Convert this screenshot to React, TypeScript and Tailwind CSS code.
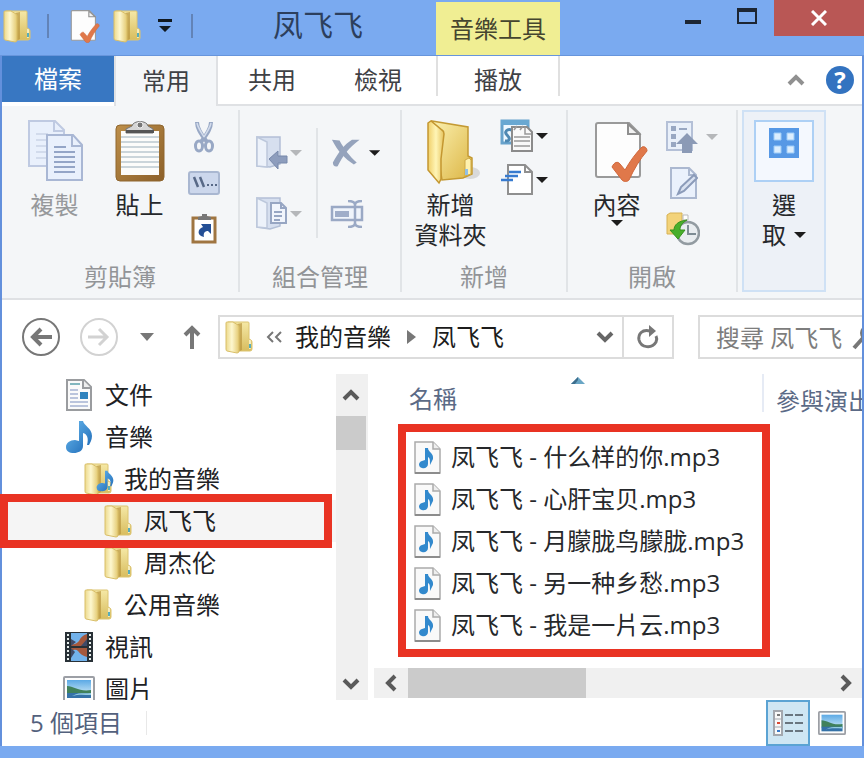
import type { ReactNode } from "react";

function Folder() {
  return (
    <svg width="28" height="34" viewBox="0 0 28 34" aria-hidden="true">
      <defs>
        <linearGradient id="fBack" x1="0" y1="0" x2="0" y2="1">
          <stop offset="0" stopColor="#f5e8a6" />
          <stop offset="1" stopColor="#d8bd5e" />
        </linearGradient>
        <linearGradient id="fFront" x1="0" y1="0" x2="1" y2="0">
          <stop offset="0" stopColor="#ecd98c" />
          <stop offset="0.45" stopColor="#fdf7cf" />
          <stop offset="1" stopColor="#e3c970" />
        </linearGradient>
      </defs>
      <path d="M3 2h20q1 0 1 1v16l2 1q1 1 1 2v7q0 2-2 2H12z" fill="url(#fBack)" stroke="#dcc471" strokeWidth="1" />
      <path d="M12 4l5-1v27l-4 2z" fill="#b9953f" opacity="0.7" />
      <path d="M1 3q0-1 1-1h6l5 3q1 1 1 2v24q0 2-2 2L2 31q-1 0-1-2z" fill="url(#fFront)" stroke="#d9bf69" strokeWidth="1" />
      <path d="M24 20h1q1 0 1 1v7q0 1-1 1h-1z" fill="#f6ecbc" />
      <path d="M24 24h2v4h-2z" fill="#57aebb" />
    </svg>
  );
}

function Note({ className = "" }: { className?: string }) {
  return (
    <svg className={className} viewBox="0 0 28 34" aria-hidden="true">
      <defs>
        <linearGradient id="note" x1="0" y1="0" x2="1" y2="1">
          <stop offset="0" stopColor="#6bbcf0" />
          <stop offset="1" stopColor="#1b66b4" />
        </linearGradient>
      </defs>
      <path
        d="M14 1h4c1 5 9 7 9 15 0 4-2 7-3 9h-2c2-7 0-11-4-12v13c0 5-5 7-9 7-5 0-8-2-8-6s4-7 9-7l4 1z"
        fill="url(#note)"
      />
    </svg>
  );
}

function MusicFolder() {
  return (
    <span className="relative block">
      <Folder />
      <Note className="absolute bottom-[1px] left-3 h-7 w-[18px]" />
    </span>
  );
}

function CheckPage({ width, height }: { width: number; height: number }) {
  return (
    <svg width={width} height={height} viewBox="0 0 54 62" aria-hidden="true">
      <path d="M2 5q0-2 2-2h31l11 11v41q0 2-2 2H4q-2 0-2-2z" fill="#fdfdfd" stroke="#9a9a9a" strokeWidth="2" />
      <path d="M34 4v10h11z" fill="#f2f2f2" stroke="#8f8f8f" strokeWidth="2" />
      <path d="M18 47c2-5 6-6 8-3l5 6c5-9 11-17 17-23 3-1 5 1 5 4-7 8-13 18-18 29-2 2-5 2-7 0z" fill="#e0784a" stroke="#d0683c" strokeWidth="1" />
    </svg>
  );
}

function Arrow({ className = "text-[#1c1c1c]" }: { className?: string }) {
  return (
    <svg className={className} width="12" height="6" viewBox="0 0 12 6" aria-hidden="true">
      <path d="M0 0h12L6 6z" fill="currentColor" />
    </svg>
  );
}

function CopyIcon() {
  return (
    <svg width="56" height="62" viewBox="0 0 56 62" fill="#e9f0fc" stroke="#a9b7d4" strokeWidth="2" aria-hidden="true">
      <path d="M2 1h26l9 9v36H2z" stroke="#bfcae2" />
      <path d="M27 2v9h9" stroke="#bfcae2" />
      <path d="M9 14h12M9 20h12M9 26h12M9 32h12M9 38h12" stroke="#d2dbec" />
      <path d="M20 15h26l9 10v35H20z" />
      <path d="M45 16v10h9" />
      <path d="M27 27h12M27 32h21M27 37h21M27 42h21M27 47h21M27 52h21" stroke="#94a5c7" />
    </svg>
  );
}

function PasteIcon() {
  return (
    <svg width="52" height="62" viewBox="0 0 52 62" aria-hidden="true">
      <defs>
        <linearGradient id="board" x1="0" y1="0" x2="1" y2="1">
          <stop offset="0" stopColor="#bd8f4a" />
          <stop offset="1" stopColor="#8c6029" />
        </linearGradient>
      </defs>
      <rect x="2" y="5" width="48" height="56" rx="4" fill="url(#board)" stroke="#8f662f" />
      <path d="M7 11h38v44H7z" fill="#fcfcfa" />
      <path d="M7 17h38M7 22h38M7 27h38M7 32h38M7 37h38M7 42h38M7 47h38" stroke="#bac7cf" strokeWidth="1.5" />
      <path d="M12 13V9l6-3c1-6 15-6 16 0l5 3v4z" fill="#d5d5d5" stroke="#777" />
      <path d="M12 10h28v3H12z" fill="#555" />
      <circle cx="26" cy="5" r="3" fill="#777" stroke="#eee" />
    </svg>
  );
}

function ScissorsIcon() {
  return (
    <svg width="22" height="32" viewBox="0 0 22 32" fill="none" aria-hidden="true">
      <path d="M4 1c0 6 3 11 10 20M18 1c0 6-3 11-10 20" stroke="#98a8c5" strokeWidth="4" />
      <path d="M4 2c1 5 4 9 7 14M18 2c-1 5-4 9-7 14" stroke="#d3dcec" strokeWidth="1.5" />
      <ellipse cx="6" cy="25" rx="3.5" ry="5" stroke="#98a8c5" strokeWidth="3" />
      <ellipse cx="16" cy="25" rx="3.5" ry="5" stroke="#98a8c5" strokeWidth="3" />
    </svg>
  );
}

function PathIcon() {
  return (
    <svg width="32" height="24" viewBox="0 0 32 24" aria-hidden="true">
      <rect x="1" y="1" width="30" height="22" rx="2" fill="#ccd7ec" stroke="#a9b7d1" strokeWidth="2" />
      <path d="M6 6l4 10M12 6l4 10" stroke="#586987" strokeWidth="2.5" />
      <path d="M19 14h2M23 14h2M27 14h2" stroke="#586987" strokeWidth="2" />
    </svg>
  );
}

function ShortcutIcon() {
  return (
    <svg width="26" height="30" viewBox="0 0 26 30" aria-hidden="true">
      <rect x="2" y="4" width="22" height="24" fill="#fff" stroke="#9f7541" strokeWidth="3" />
      <path d="M7 6V3l4-1V0h5v2l4 1v3z" fill="#777" />
      <path d="M10 10h10v10l-3-3c-3 0-5 2-4 6-7-1-7-8-1-10z" fill="#244f95" />
    </svg>
  );
}

function MoveIcon() {
  return (
    <svg width="32" height="34" viewBox="0 0 32 34" aria-hidden="true">
      <path d="M1 1h23v27l-10 3L1 30z" fill="#d6dfef" stroke="#b2bfd6" strokeWidth="1.5" />
      <path d="M1 1l10 5v25L1 30z" fill="#edf2fa" stroke="#bdc8dc" strokeWidth="1.5" />
      <path d="M13 23l9-8v5h9v7h-9v6z" fill="#8d9dbd" stroke="#7788aa" />
    </svg>
  );
}

function CopyToIcon() {
  return (
    <svg width="32" height="34" viewBox="0 0 32 34" aria-hidden="true">
      <path d="M1 1h23v28l-10 3L1 30z" fill="#d6dfef" stroke="#b2bfd6" strokeWidth="1.5" />
      <path d="M1 1l10 5v25L1 30z" fill="#edf2fa" stroke="#bdc8dc" strokeWidth="1.5" />
      <path d="M15 6h10l5 5v15H15z" fill="#f1f5fc" stroke="#97a6c3" strokeWidth="2" />
      <path d="M25 6v5h5M18 15h8M18 19h8M18 23h6" fill="none" stroke="#97a6c3" strokeWidth="2" />
    </svg>
  );
}

function DeleteIcon() {
  return (
    <svg width="32" height="30" viewBox="0 0 32 30" fill="#95a3bc" aria-hidden="true">
      <path d="M2 1l8 1c5 9 10 16 18 23l-3 2C16 21 8 13 2 1z" />
      <path d="M23 1h8C20 9 13 18 8 29c-3 1-5-1-5-4C9 14 15 6 23 1z" />
    </svg>
  );
}

function RenameIcon() {
  return (
    <svg width="34" height="28" viewBox="0 0 34 28" fill="none" stroke="#9aa9c5" aria-hidden="true">
      <path d="M2 7h30v13H2z" fill="#eff4fb" strokeWidth="2.5" />
      <path d="M5 11h14v6H5z" fill="#9fadc9" stroke="none" />
      <path d="M18 1c4 0 7 1 7 4v18c0 3-3 4-7 4M32 1c-4 0-7 1-7 4v18c0 3 3 4 7 4" strokeWidth="2.5" />
    </svg>
  );
}

function BigFolder() {
  return (
    <svg width="54" height="66" viewBox="0 0 54 66" className="overflow-visible" aria-hidden="true">
      <defs>
        <linearGradient id="bf" x1="0" y1="0" x2="1" y2="1">
          <stop offset="0" stopColor="#fbf1b0" />
          <stop offset="1" stopColor="#dcb544" />
        </linearGradient>
        <linearGradient id="bf2" x1="0" y1="0" x2="1" y2="0">
          <stop offset="0" stopColor="#f0cf69" />
          <stop offset="0.5" stopColor="#fff5b6" />
          <stop offset="1" stopColor="#e5c25b" />
        </linearGradient>
      </defs>
      <ellipse cx="46" cy="53" rx="10" ry="6" fill="#bbb" opacity="0.5" />
      <path d="M8 1l36 6v29l4 2v16l-9 4-21 2z" fill="url(#bf)" stroke="#c49a34" strokeWidth="1.5" />
      <path d="M4 3l3-2 11 9q2 1 2 4l-3 25v20l-2 4L4 50z" fill="url(#bf2)" stroke="#c49730" strokeWidth="1.5" />
      <path d="M41 40l4-2 2 2v14l-6 2z" fill="#fff2ae" stroke="#cda847" />
      <path d="M41 49h3v6h-3z" fill="#91bfe4" />
    </svg>
  );
}

function NewItemIcon() {
  return (
    <svg width="34" height="34" viewBox="0 0 34 34" aria-hidden="true">
      <path d="M2 2h26v22H2z" fill="#eef8ff" stroke="#67a2cb" strokeWidth="3" />
      <path d="M1 1h28v5H1z" fill="#69a8d2" />
      <path d="M12 11c-5-2-8 2-5 5s4 6-2 6" fill="none" stroke="#4e88b2" strokeWidth="3" />
      <path d="M12 8h15l5 5v19H12z" fill="#f9f9f9" stroke="#8b8b8b" strokeWidth="2" />
      <path d="M14 11l3-4M20 11l3-4M25 8v7h6M14 18h16M14 22h16M14 27h16" fill="none" stroke="#999" strokeWidth="1.5" />
    </svg>
  );
}

function EasyAccessIcon() {
  return (
    <svg width="34" height="32" viewBox="0 0 34 32" aria-hidden="true">
      <path d="M8 1h17l7 7v22H8z" fill="#fff" stroke="#8f8f8f" strokeWidth="2" />
      <path d="M25 2v6h6" fill="none" stroke="#8f8f8f" strokeWidth="2" />
      <path d="M9 8h12M5 12h13M1 16h12" stroke="#377bd0" strokeWidth="2.5" />
    </svg>
  );
}

function OpenIcon() {
  return (
    <svg width="32" height="32" viewBox="0 0 32 32" aria-hidden="true">
      <path d="M1 1h25v28H1z" fill="#e9f0fa" stroke="#b4c0d7" strokeWidth="2" />
      <path d="M5 5h5v5H5zM5 13h5v5H5zM5 21h5v5H5zM13 7h8v2h-8z" fill="#98a7c2" />
      <path d="M21 12l11 11h-6v9H16v-9h-6z" fill="#8b9ab6" />
    </svg>
  );
}

function EditIcon() {
  return (
    <svg width="28" height="32" viewBox="0 0 28 32" aria-hidden="true">
      <path d="M1 1h18l7 7v23H1z" fill="#eaf1fc" stroke="#abb8d0" strokeWidth="2" />
      <path d="M19 1v7h7" fill="none" stroke="#abb8d0" strokeWidth="2" />
      <path d="M8 27l3-7 13-12 3 3-13 13z" fill="#d9e2f1" stroke="#8b9bb9" strokeWidth="2" />
    </svg>
  );
}

function HistoryIcon() {
  return (
    <svg width="34" height="34" viewBox="0 0 34 34" aria-hidden="true">
      <path d="M1 3l3-2h12v21H1z" fill="#f3d37a" stroke="#d7b254" />
      <path d="M17 3h5v5h-5z" fill="#fff" stroke="#b9b9b9" />
      <circle cx="22" cy="21" r="11" fill="#e9edf0" stroke="#929ba1" strokeWidth="2.5" />
      <path d="M22 13v9h8" fill="none" stroke="#7e8c94" strokeWidth="2" />
      <path d="M21 8C12 9 8 13 8 18H4l8 9 7-9h-5c0-4 2-7 7-10z" fill="#48af2b" stroke="#36911e" />
    </svg>
  );
}

function DocumentIcon() {
  return (
    <svg width="28" height="34" viewBox="0 0 28 34" aria-hidden="true">
      <path d="M2 2h17l7 7v23H2z" fill="#fafafa" stroke="#9a9c9f" strokeWidth="2" />
      <path d="M18 2v8h8" fill="#eee" stroke="#9a9c9f" strokeWidth="2" />
      <path d="M5 6h10" stroke="#5ba1ab" strokeWidth="1.5" />
      <path d="M5 12h8M5 16h8M5 20h8M5 24h18M5 28h18" stroke="#a5b3d2" strokeWidth="1.5" />
      <path d="M15 14h8v7h-8z" fill="#2f82bd" />
    </svg>
  );
}

function VideoIcon() {
  return (
    <svg width="28" height="32" viewBox="0 0 28 32" aria-hidden="true">
      <path d="M0 1h28v30H0z" fill="#293137" />
      <path d="M6 2h16v13H6zM6 17h16v13H6z" fill="#72b2eb" />
      <path d="M22 3v12H6v-2c4 1 6-1 8-3 2-4 4-6 8-7zM6 17h16v9c-4-1-7-3-9-6-2-2-4-1-7 0z" fill="#a5583c" />
      <path d="M6 8l5 3-5 4zM22 8v7h-6zM6 17l4 4-4 6z" fill="#3f4a68" />
      <path d="M3 3v27M25 3v27" stroke="#e9f0ee" strokeWidth="2" strokeDasharray="2 2" />
    </svg>
  );
}

function PictureIcon({ width, height }: { width: number; height: number }) {
  return (
    <svg width={width} height={height} viewBox="0 0 32 26" aria-hidden="true" preserveAspectRatio="none">
      <defs>
        <linearGradient id="sky" x1="0" y1="0" x2="0" y2="1">
          <stop offset="0" stopColor="#5ba9e5" />
          <stop offset="1" stopColor="#e6f7fa" />
        </linearGradient>
      </defs>
      <rect x="1" y="1" width="30" height="24" rx="1" fill="#fdfdfd" stroke="#9c9fa5" strokeWidth="2" />
      <path d="M4 4h24v18H4z" fill="url(#sky)" />
      <path d="M4 10c7 0 12 6 24 4v4H4z" fill="#40815b" />
      <path d="M4 17h24v5H4z" fill="#3572a8" />
      <path d="M9 20c7-4 12-2 19-3v2c-7 0-12-1-19 1z" fill="#94cce0" />
    </svg>
  );
}

function MusicFileIcon() {
  return (
    <svg width="27" height="33" viewBox="0 0 27 33" className="shrink-0" aria-hidden="true">
      <path d="M1 1h18l7 7v24H1z" fill="#f9f9f9" stroke="#aaa" strokeWidth="1.5" />
      <path d="M19 1v7h7" fill="#eee" stroke="#aaa" strokeWidth="1.5" />
      <path d="M1 32h25" stroke="#8c8c8c" strokeWidth="2" />
      <path d="M11 7h3c0 4 6 5 5 11l-3 6c0-5 0-7-2-8v7c0 3-3 5-6 4-4-1-4-6 0-7l3-1z" fill="#3289cd" />
    </svg>
  );
}

function Chevron({ d, className = "" }: { d: string; className?: string }) {
  return (
    <svg width="18" height="18" viewBox="0 0 18 18" className={className} fill="none" stroke="currentColor" strokeWidth="4" aria-hidden="true">
      <path d={d} />
    </svg>
  );
}

const UP = "M2 13l7-7 7 7";
const DOWN = "M2 5l7 7 7-7";
const LEFT = "M13 2L6 9l7 7";
const RIGHT = "M5 2l7 7-7 7";

function Group({ label, className, children }: { label: string; className: string; children: ReactNode }) {
  return (
    <section aria-label={label} className={`flex shrink-0 flex-col border-r-2 border-[#e1e4e7] ${className}`}>
      <div className="flex h-[152px]">{children}</div>
      <p className="text-center leading-[30px] text-[#929497]">{label}</p>
    </section>
  );
}

function BigButton({ icon, className = "", children }: { icon: ReactNode; className?: string; children: ReactNode }) {
  return (
    <button className={`flex w-[85px] shrink-0 flex-col items-center pt-[10px] leading-[30px] ${className}`}>
      <span className="mb-2 flex h-[62px] items-start justify-center">{icon}</span>
      {children}
    </button>
  );
}

function SmallColumn({ className = "", children }: { className?: string; children: ReactNode }) {
  return <div className={`flex shrink-0 flex-col pt-1 ${className}`}>{children}</div>;
}

function IconButton({ label, className = "", children }: { label: string; className?: string; children: ReactNode }) {
  return (
    <button aria-label={label} className={`flex shrink-0 items-center ${className}`}>
      {children}
    </button>
  );
}

const tree = [
  { name: "文件", indent: "pl-[63px]", icon: <DocumentIcon /> },
  { name: "音樂", indent: "pl-[63px]", icon: <Note className="h-[34px] w-7" /> },
  { name: "我的音樂", indent: "pl-[82px]", icon: <MusicFolder /> },
  { name: "凤飞飞", indent: "pl-[102px]", icon: <Folder />, marked: true },
  { name: "周杰伦", indent: "pl-[102px]", icon: <Folder /> },
  { name: "公用音樂", indent: "pl-[82px]", icon: <Folder /> },
  { name: "視訊", indent: "pl-[63px]", icon: <VideoIcon /> },
  { name: "圖片", indent: "pl-[63px]", icon: <span className="-mx-1"><PictureIcon width={32} height={26} /></span> },
];

const files = [
  "凤飞飞 - 什么样的你.mp3",
  "凤飞飞 - 心肝宝贝.mp3",
  "凤飞飞 - 月朦胧鸟朦胧.mp3",
  "凤飞飞 - 另一种乡愁.mp3",
  "凤飞飞 - 我是一片云.mp3",
];

function TitleBar() {
  return (
    <header className="flex h-14 shrink-0 border-b border-[#6795dc]">
      <div className="flex w-[200px] shrink-0 items-center pb-1 pl-[3px]">
        <Folder />
        <span className="ml-4 h-6 w-[2px] bg-[#6283b7]" />
        <IconButton label="內容" className="ml-5">
          <CheckPage width={32} height={34} />
        </IconButton>
        <IconButton label="新增資料夾" className="ml-3">
          <Folder />
        </IconButton>
        <IconButton label="自訂快速存取工具列" className="ml-4">
          <svg width="16" height="14" viewBox="0 0 16 14" aria-hidden="true">
            <path d="M1 0h14v3H1zM2 7h12l-6 6z" fill="#101820" />
          </svg>
        </IconButton>
        <span className="ml-[18px] h-6 w-[2px] shrink-0 bg-[#6283b7]" />
      </div>
      <h1 className="w-[236px] shrink-0 text-center text-[30px] leading-[50px] text-[#2c3f5d]">凤飞飞</h1>
      <div className="mt-[2px] w-[124px] shrink-0 bg-[#f0ee93] text-center leading-[54px] text-[#45452f]">音樂工具</div>
      <div className="ml-auto flex h-9">
        <IconButton label="最小化" className="w-[54px] justify-center">
          <svg width="16" height="16" viewBox="0 0 16 16" aria-hidden="true">
            <path d="M0 10h16v4H0z" fill="#1d2633" />
          </svg>
        </IconButton>
        <IconButton label="最大化" className="w-[54px] justify-center">
          <svg width="20" height="20" viewBox="0 0 20 20" aria-hidden="true">
            <path d="M1 2h18v13H1z" fill="none" stroke="#1d2633" strokeWidth="2" />
            <path d="M0 0h20v4H0z" fill="#1d2633" />
          </svg>
        </IconButton>
        <IconButton label="關閉" className="w-[90px] justify-center bg-[#b95755]">
          <svg width="16" height="16" viewBox="0 0 16 16" aria-hidden="true">
            <path d="M1 1l14 14M15 1L1 15" stroke="#fff" strokeWidth="3" />
          </svg>
        </IconButton>
      </div>
    </header>
  );
}

function TabRow() {
  return (
    <div role="tablist" className="flex h-[50px] shrink-0 bg-white text-[#3f4145]">
      <button role="tab" aria-selected="false" className="mb-1 w-28 shrink-0 bg-[#3877c2] text-white">檔案</button>
      <button role="tab" aria-selected="true" className="w-[104px] shrink-0 border-x-2 border-[#dfe1e4] bg-[#f4f6f8]">常用</button>
      <div className="flex flex-1 border-b-2 border-[#dfe1e4]">
        <button role="tab" aria-selected="false" className="w-[108px] shrink-0">共用</button>
        <button role="tab" aria-selected="false" className="w-[104px] shrink-0">檢視</button>
        <button role="tab" aria-selected="false" className="mb-2 ml-[6px] w-[124px] shrink-0 border-x-2 border-[#e0e0e0] pt-2">播放</button>
        <IconButton label="最小化功能區" className="ml-auto pr-[21px] text-[#909090]">
          <Chevron d={UP} />
        </IconButton>
        <IconButton label="說明" className="mr-2">
          <span className="flex h-7 w-7 items-center justify-center rounded-full bg-[#3373c0] text-[24px] leading-7 font-bold text-white">?</span>
        </IconButton>
      </div>
    </div>
  );
}

function Ribbon() {
  return (
    <div className="flex shrink-0 overflow-hidden border-b-2 border-[#dfe1e4] bg-[#f4f6f8] pt-1 pb-[6px] text-[#26282b]">
      <Group label="剪貼簿" className="w-[238px]">
        <BigButton className="ml-[10px] text-[#97999c]" icon={<CopyIcon />}>複製</BigButton>
        <BigButton icon={<PasteIcon />}>貼上</BigButton>
        <SmallColumn className="w-11">
          <IconButton label="剪下" className="h-[46px] justify-center"><ScissorsIcon /></IconButton>
          <IconButton label="複製路徑" className="h-[46px] justify-center"><PathIcon /></IconButton>
          <IconButton label="貼上捷徑" className="h-[46px] justify-center"><ShortcutIcon /></IconButton>
        </SmallColumn>
      </Group>
      <Group label="組合管理" className="w-[162px]">
        <div className="mt-3 ml-4 flex w-[46px] flex-col">
          <IconButton label="移至" className="h-[61px] gap-[2px]"><MoveIcon /><Arrow className="text-[#b5b7ba]" /></IconButton>
          <IconButton label="複製到" className="h-[61px] gap-[2px]"><CopyToIcon /><Arrow className="text-[#b5b7ba]" /></IconButton>
        </div>
        <span className="mt-[18px] ml-[14px] h-[110px] w-[2px] bg-[#e1e4e7]" />
        <div className="mt-3 ml-3 flex w-[50px] flex-col">
          <IconButton label="刪除" className="h-[61px] gap-2"><DeleteIcon /><Arrow /></IconButton>
          <IconButton label="重新命名" className="h-[61px]"><RenameIcon /></IconButton>
        </div>
      </Group>
      <Group label="新增" className="w-[166px]">
        <BigButton className="ml-[6px]" icon={<BigFolder />}>
          <span>新增</span>
          <span>資料夾</span>
        </BigButton>
        <SmallColumn className="ml-[7px]">
          <IconButton label="新增項目" className="h-11 gap-[2px]"><NewItemIcon /><Arrow /></IconButton>
          <IconButton label="輕鬆存取" className="h-11 gap-[2px]"><EasyAccessIcon /><Arrow /></IconButton>
        </SmallColumn>
      </Group>
      <Group label="開啟" className="w-[170px]">
        <BigButton className="ml-[6px]" icon={<span className="pl-2"><CheckPage width={54} height={62} /></span>}>
          <span>內容</span>
          <Arrow />
        </BigButton>
        <SmallColumn className="ml-[7px]">
          <IconButton label="開啟" className="h-[46px] gap-2"><OpenIcon /><Arrow className="text-[#b5b7ba]" /></IconButton>
          <IconButton label="編輯" className="h-[46px] pl-1"><EditIcon /></IconButton>
          <IconButton label="歷程記錄" className="h-[46px]"><HistoryIcon /></IconButton>
        </SmallColumn>
      </Group>
      <button className="ml-1 flex w-[84px] shrink-0 flex-col items-center border-2 border-[#cfe1f5] bg-[#edf1f7] pt-2 leading-[30px]">
        <span className="mb-2 flex h-[62px] w-[60px] items-start justify-center border-2 border-[#add0f5] bg-[#f4f8fe] pt-[6px]">
          <svg width="30" height="30" viewBox="0 0 30 30" aria-hidden="true">
            <path d="M0 0h30v30H0z" fill="#5698e5" />
            <path d="M5 5h7v7H5zM18 5h7v7h-7zM5 18h7v7H5zM18 18h7v7h-7z" fill="#dceefe" stroke="#9dccf8" />
          </svg>
        </span>
        <span>選</span>
        <span className="flex items-center gap-2">取<Arrow /></span>
      </button>
    </div>
  );
}

function AddressBar() {
  return (
    <div className="flex h-[74px] shrink-0 items-center overflow-hidden bg-white pl-5 text-[#777]">
      <IconButton label="上一頁">
        <svg width="38" height="38" viewBox="0 0 38 38" fill="none" stroke="#777" aria-hidden="true">
          <circle cx="19" cy="19" r="18" strokeWidth="2" />
          <path d="M30 19H12M19 11l-8 8 8 8" strokeWidth="4" />
        </svg>
      </IconButton>
      <IconButton label="下一頁" className="ml-5">
        <svg width="38" height="38" viewBox="0 0 38 38" fill="none" stroke="#d2d2d2" aria-hidden="true">
          <circle cx="19" cy="19" r="18" strokeWidth="2" />
          <path d="M8 19h18M19 11l8 8-8 8" strokeWidth="3" />
        </svg>
      </IconButton>
      <IconButton label="最近的位置" className="ml-[22px]">
        <svg width="14" height="8" viewBox="0 0 14 8" aria-hidden="true"><path d="M0 0h14L7 8z" fill="#777" /></svg>
      </IconButton>
      <IconButton label="上一層" className="ml-[29px]">
        <svg width="18" height="26" viewBox="0 0 18 26" fill="none" stroke="#777" strokeWidth="4" aria-hidden="true">
          <path d="M9 25V4M2 11l7-7 7 7" />
        </svg>
      </IconButton>
      <nav aria-label="位址" className="ml-[17px] flex h-11 min-w-0 flex-1 items-center border-2 border-[#dcdcdc] pl-[5px] text-[#1c1c1c]">
        <Folder />
        <button aria-label="更多位置" className="ml-3 text-[#777]">
          <svg width="18" height="14" viewBox="0 0 18 14" fill="none" stroke="currentColor" strokeWidth="2" aria-hidden="true">
            <path d="M8 2L3 7l5 5M16 2l-5 5 5 5" />
          </svg>
        </button>
        <button className="ml-3 shrink-0">我的音樂</button>
        <svg width="9" height="16" viewBox="0 0 9 16" className="mx-4 shrink-0" aria-hidden="true"><path d="M0 1l9 7-9 7z" fill="#777" /></svg>
        <button className="shrink-0">凤飞飞</button>
        <IconButton label="先前的位置" className="mr-2 ml-auto text-[#666]"><Chevron d={DOWN} /></IconButton>
        <IconButton label="重新整理" className="h-full w-[50px] justify-center border-l-2 border-[#dcdcdc]">
          <svg width="24" height="26" viewBox="0 0 24 26" fill="none" stroke="#777" strokeWidth="3" aria-hidden="true">
            <path d="M14 7C6 5 2 10 3 16c2 8 13 9 17 2 1-2 1-4 0-6" />
            <path d="M13 1l7 6-7 6z" fill="#777" stroke="none" />
          </svg>
        </IconButton>
      </nav>
      <label className="ml-6 flex h-11 w-[164px] shrink-0 items-center overflow-hidden border-2 border-r-0 border-[#dcdcdc] pl-4">
        <input aria-label="搜尋" type="text" placeholder="搜尋 凤飞飞" className="h-10 w-[136px] shrink-0 bg-transparent outline-none placeholder:text-[#7d7d7d]" />
        <svg width="26" height="26" viewBox="0 0 26 26" className="shrink-0" fill="none" stroke="#777" aria-hidden="true">
          <path d="M2 24l9-10" strokeWidth="4" />
          <circle cx="16" cy="9" r="7" strokeWidth="2" />
        </svg>
      </label>
    </div>
  );
}

function TreePane() {
  return (
    <div className="flex w-[366px] shrink-0">
      <ul className="min-w-0 flex-1 overflow-x-visible overflow-y-clip">
        {tree.map((node) => (
          <li key={node.name} className="relative">
            <button className={`flex h-[42px] w-full items-center ${node.indent} ${node.marked ? "bg-[#f5f5f5]" : ""}`}>
              <span className="flex w-7 shrink-0 items-center justify-center">{node.icon}</span>
              <span className="ml-3">{node.name}</span>
            </button>
            {node.marked && <span className="pointer-events-none absolute -top-[6px] right-1 -bottom-[6px] -left-[2px] z-10 border-8 border-[#e93323]" />}
          </li>
        ))}
      </ul>
      <div className="flex w-8 flex-col bg-[#f0f0f0] text-[#5a5a5a]">
        <IconButton label="向上捲動" className="h-[42px] w-[30px] justify-center"><Chevron d={UP} /></IconButton>
        <span className="h-[34px] w-[30px] bg-[#cbcbcb]" />
        <IconButton label="向下捲動" className="mt-auto h-8 w-[30px] justify-center"><Chevron d={DOWN} /></IconButton>
      </div>
    </div>
  );
}

function FilePane() {
  return (
    <section aria-label="檔案" className="ml-[6px] flex min-w-0 flex-1 flex-col overflow-hidden">
      <div className="flex h-[50px] shrink-0 text-[#5b6a86]">
        <button className="relative w-[388px] shrink-0 pl-[35px] text-left">
          名稱
          <svg width="14" height="8" viewBox="0 0 14 8" className="absolute top-[2px] left-[197px]" aria-hidden="true">
            <path d="M0 8l7-7 7 7z" fill="#6aa6c5" />
            <path d="M0 8l7-7v3L4 8z" fill="#3c6d8c" />
          </svg>
        </button>
        <button className="mb-3 shrink-0 border-l-2 border-[#e6ebf5] pt-3 pl-3 whitespace-nowrap">參與演出者</button>
      </div>
      <ul className="ml-6 w-[372px] shrink-0 border-8 border-[#e93323] pt-1 pb-[3px] text-[#26282b]">
        {files.map((name) => (
          <li key={name}>
            <button className="flex h-[42px] w-full items-center gap-[10px] pl-2 whitespace-nowrap">
              <MusicFileIcon />
              {name}
            </button>
          </li>
        ))}
      </ul>
      <div className="mt-auto mb-[2px] flex h-[30px] shrink-0 items-center bg-[#f0f0f0] text-[#5a5a5a]">
        <IconButton label="向左捲動" className="h-full w-[34px] justify-center"><Chevron d={LEFT} /></IconButton>
        <span className="h-full w-[178px] bg-[#cbcbcb]" />
        <IconButton label="向右捲動" className="ml-auto h-full w-8 justify-center"><Chevron d={RIGHT} /></IconButton>
      </div>
    </section>
  );
}

function StatusBar() {
  return (
    <footer className="flex h-[46px] shrink-0 items-center bg-white pl-7 text-[#53617d]">
      <p>5 個項目</p>
      <span className="ml-6 h-6 w-px bg-[#e8e8e8]" />
      <IconButton label="詳細資料" className="ml-auto h-full w-11 justify-center border-2 border-[#5ba3d3] bg-[#cfe6f3]">
        <svg width="30" height="26" viewBox="0 0 30 26" aria-hidden="true">
          <path d="M1 1h8v24H1z" fill="#f9f9f9" stroke="#a3a7ae" strokeWidth="2" />
          <path d="M1 9h8M1 17h8" stroke="#a3a7ae" />
          <path d="M4 4h3v2H4z" fill="#777" />
          <path d="M4 12h3v2H4z" fill="#d94b36" />
          <path d="M4 20h3v2H4z" fill="#3979c7" />
          <path d="M12 5h8M22 5h8M12 13h8M22 13h8M12 21h8M22 21h8" stroke="#69757f" strokeWidth="2" />
        </svg>
      </IconButton>
      <IconButton label="大圖示" className="h-full w-[52px] pl-2">
        <PictureIcon width={28} height={24} />
      </IconButton>
    </footer>
  );
}

export default function App() {
  return (
    <main className="flex h-screen min-h-[700px] flex-col overflow-hidden bg-[#7aaaf0] pb-3 font-['Open_Sans','Noto_Sans_CJK_TC',sans-serif] text-[24px] leading-[30px]">
      <TitleBar />
      <div className="flex min-h-0 flex-1 flex-col border-x-2 border-[#6390dc]">
        <TabRow />
        <Ribbon />
        <AddressBar />
        <div className="flex min-h-0 flex-1 bg-white text-[#202124]">
          <TreePane />
          <FilePane />
        </div>
        <StatusBar />
      </div>
    </main>
  );
}
